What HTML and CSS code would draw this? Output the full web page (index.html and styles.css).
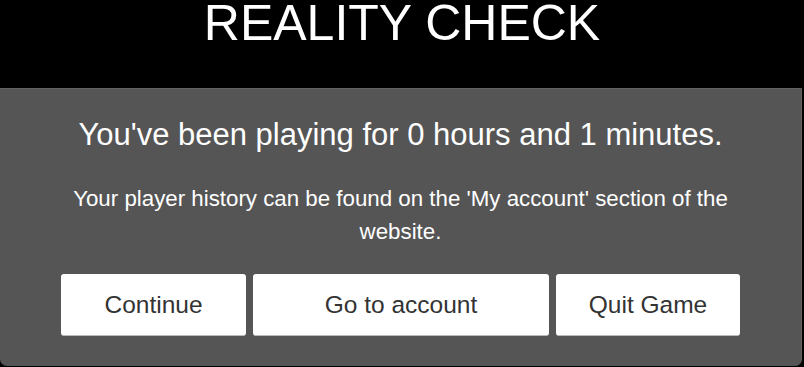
FILE: index.html
```html
<!DOCTYPE html>
<html lang="en">
  <head>
    <meta charset="UTF-8" />
    <meta name="viewport" content="width=device-width, initial-scale=1.0" />
    <title>Reality check</title>
    <link rel="stylesheet" href="styles.css">
  </head>
  <body>
    <header class="top">
      <h1>REALITY CHECK</h1>
    </header>

    <div class="panel">
      <h2 class="played">You've been playing for 0 hours and 1 minutes.</h2>
      <p class="history">Your player history can be found on the 'My account' section of the website.</p>
      <div class="actions">
        <button class="btn continue">Continue</button>
        <button class="btn account">Go to account</button>
        <button class="btn quit">Quit Game</button>
      </div>
    </div>
  </body>
</html>
```

FILE: styles.css
```css
* {
  margin: 0;
  padding: 0;
  box-sizing: border-box;
}
body {
  background-color: black;
  color: white;
  font-family: "Liberation Sans", Arial, sans-serif;
  text-align: center;
  width: 804px;
  height: 367px;
  overflow: hidden;
}
.top {
  height: 88px;
}
.top h1 {
  font-size: 50px;
  font-weight: normal;
  line-height: 46px;
}
.panel {
  width: 802px;
  height: 278px;
  background-color: #555555;
  border-top: 1px solid #616161;
  border-right: 1px solid #616161;
  border-radius: 0 0 7px 7px;
  padding-top: 28px;
}
.played {
  font-size: 31px;
  font-weight: normal;
  line-height: 36px;
}
.history {
  width: 690px;
  margin: 29px auto 0;
  font-size: 22.3px;
  line-height: 33px;
}
.actions {
  display: flex;
  justify-content: center;
  gap: 7px;
  margin-top: 26px;
}
.btn {
  height: 62px;
  border: none;
  border-bottom: 1px solid #bbbbbb;
  border-radius: 3px;
  background-color: white;
  color: #333333;
  font-family: "Liberation Sans", Arial, sans-serif;
  font-size: 24.5px;
}
.continue {
  width: 185px;
}
.account {
  width: 296px;
}
.quit {
  width: 184px;
}
```
